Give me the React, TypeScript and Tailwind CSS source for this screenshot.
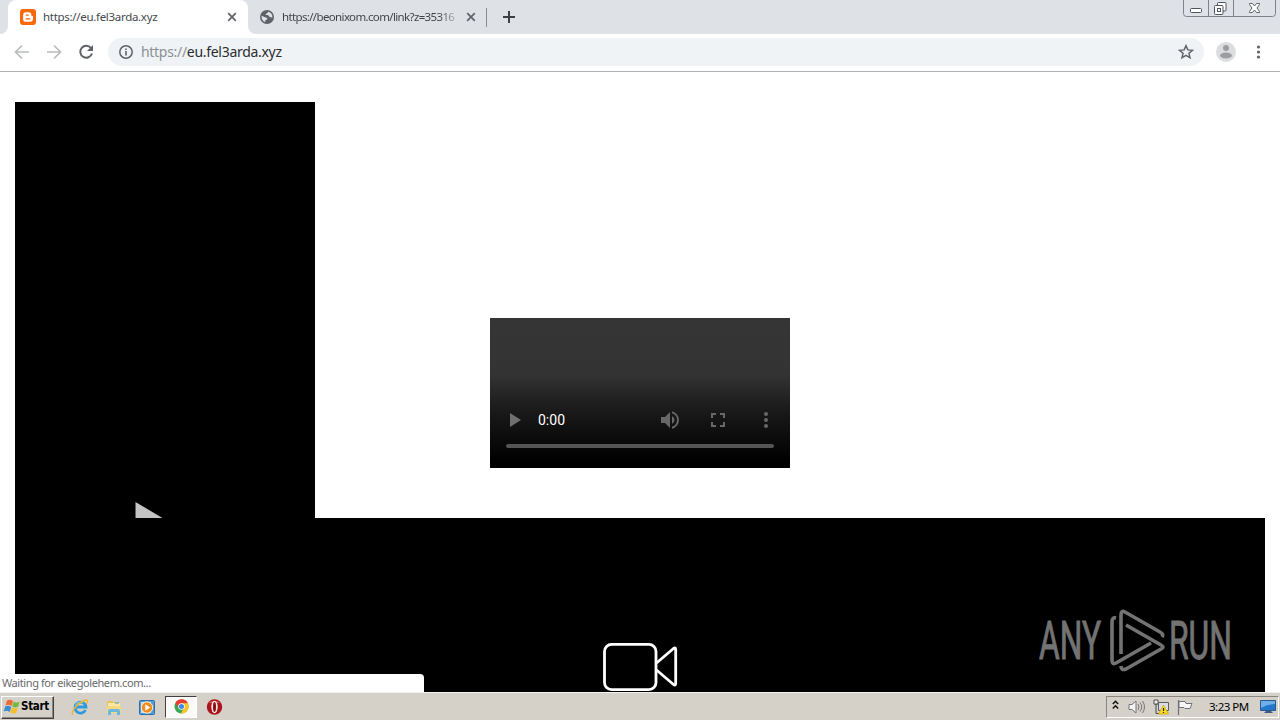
import React from 'react';

function BloggerIcon() {
  return (
    <svg className="h-4 w-4 shrink-0" viewBox="0 0 16 16">
      <rect width="16" height="16" rx="3" fill="#f8690b" />
      <path d="M6 3.2h2.6a2.8 2.8 0 0 1 2.8 2.8c0 .8.3 1 .9 1 .5 0 .7.3.7.8v2a3 3 0 0 1-3 3H6a2.9 2.9 0 0 1-2.9-2.9V6.1A2.9 2.9 0 0 1 6 3.2Z" fill="#fff" />
      <path d="M6.2 6.1h2M6.2 9.9h3.6" stroke="#f8690b" strokeWidth="1.4" strokeLinecap="round" />
    </svg>
  );
}

function GlobeIcon() {
  return (
    <svg className="h-[14px] w-[14px] shrink-0" viewBox="0 0 14 14">
      <circle cx="7" cy="7" r="7" fill="#5f6368" />
      <path d="M1.6 5.8 5 7.2c1 .4 1.8.2 2.2 1.2.3.8-.3 1.2-1.2 1.4-.8.2-.4 1.7-.9 2.2C2.8 11.3 1.3 9 1.6 5.8ZM8 1.7c-.1 1-.2 1.3-1.2 1.5-.8.2-.5 1.2-1.3 1.5.8.9 2.2.2 3 .8.8.6.8 1.8 2 1.7.8-.1 1.1.3 1.9.3C12.7 4.5 10.9 2.1 8 1.7Z" fill="#dee1e6" />
    </svg>
  );
}

function CloseIcon() {
  return (
    <svg className="h-[10px] w-[10px] shrink-0" viewBox="0 0 10 10">
      <path d="m1.2 1.2 7.6 7.6m0-7.6-7.6 7.6" stroke="#5f6368" strokeWidth="1.7" />
    </svg>
  );
}

function TabStrip() {
  return (
    <div className="flex h-[34px] shrink-0 bg-[#dee1e6]">
      <svg className="h-[34px] w-2 shrink-0" viewBox="0 0 8 34">
        <path d="M8 26v8H0a8 8 0 0 0 8-8Z" fill="#fff" />
      </svg>
      <div className="flex w-[240px] items-center rounded-t-lg bg-white pl-3">
        <BloggerIcon />
        <span className="ml-[7px] w-[184px] whitespace-nowrap text-[11.5px] tracking-[-0.3px] text-[#45494d]">https://eu.fel3arda.xyz</span>
        <CloseIcon />
      </div>
      <div className="flex w-[239px] items-center">
        <svg className="h-[34px] w-2 shrink-0" viewBox="0 0 8 34">
          <path d="M0 26v8h8a8 8 0 0 1-8-8Z" fill="#fff" />
        </svg>
        <div className="ml-1 flex items-center">
          <GlobeIcon />
          <span className="ml-2 w-[175px] whitespace-nowrap bg-gradient-to-r from-[#3c4043] from-90% to-[#3c404333] bg-clip-text text-[11.5px] tracking-[-0.64px] text-transparent">https://beonixom.com/link?z=35316</span>
          <span className="ml-[9px] flex"><CloseIcon /></span>
        </div>
      </div>
      <div className="-ml-px mt-2 h-[19px] w-px shrink-0 bg-[#888c91]" />
      <svg className="ml-4 mt-[11px] h-3 w-3 shrink-0" viewBox="0 0 12 12">
        <path d="M6 0v12M0 6h12" stroke="#3c4043" strokeWidth="2" />
      </svg>
      <svg className="ml-auto mr-1 h-[17px] w-[93px] shrink-0" viewBox="0 0 93 17" fill="none">
        <path d="M.5 0v13.5a3 3 0 0 0 3 3h86a3 3 0 0 0 3-3V0M25.500 0v16M50.500 0v16" stroke="#7e828b" />
        <rect x="7.500" y="8.500" width="11" height="4" rx="1" fill="#fff" stroke="#50545e" />
        <rect x="34.500" y="2.500" width="8.500" height="8.500" rx="1" fill="#fff" stroke="#50545e" />
        <rect x="31.500" y="5.500" width="8.500" height="9" rx="1" fill="#fff" stroke="#50545e" />
        <rect x="34.500" y="8.500" width="3" height="3" stroke="#50545e" />
        <path d="M66.500 3.500h3l2 2.500 2-2.500h3v1L74 8l2.500 3.500v1h-3l-2-2.500-2 2.500h-3v-1L69 8l-2.500-3.500Z" fill="#fff" stroke="#50545e" strokeWidth=".9" />
      </svg>
    </div>
  );
}

function Toolbar() {
  return (
    <div className="flex h-[38px] shrink-0 items-center border-b border-[#b0b1b3] bg-white pb-px">
      <svg className="ml-[14px] h-4 w-[82px] shrink-0" viewBox="0 0 82 16" fill="none">
        <path d="M15 8H2M8 1.500 1.500 8 8 14.500M33 8h13M40 1.500 46.500 8 40 14.500" stroke="#babcbe" strokeWidth="1.700" />
        <path d="M77 4A6 6 0 1 0 78 9.500" stroke="#5f6368" strokeWidth="2" />
        <path d="M79 1v6h-6Z" fill="#5f6368" />
      </svg>
      <div className="ml-3 flex h-7 w-[1096px] items-center rounded-full bg-[#f0f3f5] pl-[11px] pr-[10px]">
        <svg className="h-[14px] w-[14px] shrink-0" viewBox="0 0 14 14">
          <circle cx="7" cy="7" r="6.200" fill="none" stroke="#5f6368" strokeWidth="1.500" />
          <path d="M7 6v4.500M7 3.400v1.500" stroke="#5f6368" strokeWidth="1.600" />
        </svg>
        <span className="-mt-px ml-2 whitespace-nowrap text-[14px] tracking-[-0.3px] text-[#2b2d30]"><span className="text-[#8a9095]">https://</span>eu.fel3arda.xyz</span>
        <svg className="ml-auto h-4 w-4 shrink-0" viewBox="0 0 16 16">
          <path d="m8 1.700 1.850 4.200 4.600.4-3.500 3 1.050 4.500L8 11.400l-4 2.400 1.050-4.500-3.500-3 4.600-.4Z" fill="none" stroke="#5f6368" strokeWidth="1.500" />
        </svg>
      </div>
      <svg className="ml-3 h-5 w-5 shrink-0" viewBox="0 0 20 20">
        <circle cx="10" cy="10" r="10" fill="#dcdddf" />
        <circle cx="10" cy="6" r="3" fill="#9b9da0" />
        <ellipse cx="10" cy="13.500" rx="6" ry="3" fill="#9b9da0" />
      </svg>
      <svg className="ml-5 h-4 w-[5px] shrink-0" viewBox="0 0 5 16" fill="#5f6368">
        <circle cx="2.500" cy="3" r="1.600" /><circle cx="2.500" cy="8" r="1.600" /><circle cx="2.500" cy="13" r="1.600" />
      </svg>
    </div>
  );
}

function VideoPlayer() {
  return (
    <div className="flex h-[150px] w-[300px] flex-col justify-end bg-[linear-gradient(#353535_0%,#333_38%,#1d1d1d_58%,#0d0d0d_78%,#000_96%)] px-4 pb-5">
      <div className="flex h-8 items-center">
        <svg className="ml-1 h-[14px] w-[11px] shrink-0" viewBox="0 0 11 14"><path d="M0 0v14l11-7Z" fill="#6f6f6f" /></svg>
        <span className="ml-[17px] font-['Roboto'] text-[14px] text-white">0:00</span>
        <svg className="ml-auto h-6 w-6 shrink-0" viewBox="0 0 24 24" fill="#686868">
          <path d="M3 9v6h4l5 5V4L7 9H3zm13.500 3A4.500 4.500 0 0 0 14 7.970v8.050A4.500 4.500 0 0 0 16.500 12zM14 3.230v2.060a7 7 0 0 1 0 13.420v2.060a9 9 0 0 0 0-17.540z" />
        </svg>
        <svg className="ml-6 h-6 w-6 shrink-0" viewBox="0 0 24 24" fill="#686868">
          <path d="M7 14H5v5h5v-2H7v-3zm-2-4h2V7h3V5H5v5zm12 7h-3v2h5v-5h-2v3zM14 5v2h3v3h2V5h-5z" />
        </svg>
        <svg className="-mr-1 ml-6 h-6 w-6 shrink-0" viewBox="0 0 24 24" fill="#686868">
          <circle cx="12" cy="6" r="2" /><circle cx="12" cy="12" r="2" /><circle cx="12" cy="18" r="2" />
        </svg>
      </div>
      <div className="mt-2 h-1 rounded-full bg-[#555]" />
    </div>
  );
}

function AnyRunMark() {
  return (
    <svg className="h-[64px] w-[200px] shrink-0" viewBox="0 0 200 64" fill="#737373">
      <g fontFamily="Roboto, sans-serif" fontSize="53" stroke="#737373" strokeWidth="1">
        <text x="1" y="50" textLength="62" lengthAdjust="spacingAndGlyphs">ANY</text>
        <text x="131" y="50" textLength="63" lengthAdjust="spacingAndGlyphs">RUN</text>
      </g>
      <g fill="none" stroke="#737373" strokeWidth="3.600" strokeLinejoin="round">
        <path d="M83 45V6q0-5 4-3l35 20q4 2 2 5" />
        <path d="M78 9q-4-1-4 4v38q0 5 4 3l35-20" />
        <path d="M88 16l35 20q4 2 0 4L88 60q-5 2-5-3" />
      </g>
    </svg>
  );
}

function Page() {
  return (
    <div className="relative flex h-[620px] shrink-0 flex-col overflow-hidden bg-white px-[15px] pt-[30px]">
      <div className="flex h-[416px] shrink-0">
        <div className="flex w-[300px] items-end bg-black">
          <svg className="ml-[120px] h-4 w-[28px]" viewBox="0 0 28 16"><path d="M.5 0v16H27.500Z" fill="#c4c4c4" /></svg>
        </div>
        <div className="ml-[175px] mt-[216px]"><VideoPlayer /></div>
      </div>
      <div className="flex h-[174px] shrink-0 items-start bg-black">
        <svg className="ml-[587px] mt-[124px] h-[50px] w-[77px] shrink-0" viewBox="0 0 77 50" fill="none" stroke="#fff" strokeWidth="2.800" strokeLinejoin="round">
          <rect x="2.500" y="2.400" width="51.500" height="45.200" rx="7" />
          <path d="M54.500 21 71.500 6.500q2.200-1.500 2.200 1v34q0 2.500-2.200 1L54.500 28" />
        </svg>
        <div className="ml-auto mr-[27px] mt-[91px]"><AnyRunMark /></div>
      </div>
      <div className="absolute bottom-0 left-0 flex h-[18px] w-[424px] items-center rounded-tr-[4px] bg-white pl-[2px] text-[11px] tracking-[-0.41px] text-[#686a6d]">Waiting for eikegolehem.com...</div>
    </div>
  );
}

function StartButton() {
  return (
    <div className="flex h-[23px] w-[53px] items-center border border-b-[#404040] border-l-white border-r-[#404040] border-t-white bg-[#d5d0c8] pl-px shadow-[inset_-1px_-1px_#8b877f]">
      <svg className="h-4 w-[17px] shrink-0" viewBox="0 0 17 16">
        <path d="M4 1.500q3-1.500 6 .5L8.500 7q-3-2-6-.5Z" fill="#ef6935" />
        <path d="M10.700 2.500q3 2 6 0L15.200 7.500q-3 2-6 0Z" fill="#75b943" />
        <path d="M2.200 7.500q3-1.500 6 .5L6.700 13q-3-2-6-.5Z" fill="#398bd2" />
        <path d="M8.900 8.500q3 2 6 0L13.400 13.500q-3 2-6 0Z" fill="#f5bf27" />
      </svg>
      <span className="ml-px font-['DejaVu_Sans_Condensed','DejaVu_Sans'] text-[11.5px] font-bold tracking-[-0.3px] text-black [font-stretch:condensed]">Start</span>
    </div>
  );
}

function Taskbar() {
  return (
    <div className="flex h-7 shrink-0 items-center border-t border-[#f3f1ed] bg-[#d5d0c8] pl-px pt-px">
      <StartButton />
      <svg className="ml-[17px] h-[18px] w-[18px] shrink-0" viewBox="0 0 18 18" fill="none">
        <path d="M14.500 12A5.500 5.500 0 1 1 15 9H5" stroke="#2e9bdc" strokeWidth="2.800" />
        <path d="M4.500 7.500A5 5 0 0 1 12 5" stroke="#86d3f6" strokeWidth="1" />
        <path d="M2 16.500c-3-2 4-11 11-14 4-1.500 4 .5 3 3" stroke="#efb72e" strokeWidth="1.500" />
      </svg>
      <svg className="ml-4 h-[17px] w-[18px] shrink-0" viewBox="0 0 18 17">
        <path d="M2 3q0-1 1-1h4l1 1h7v11H2Z" fill="#e8c35c" />
        <path d="M3 4h12v8H3Z" fill="#fae9a0" />
        <path d="M2 7h14v7H2Z" fill="#f4d980" />
        <path d="M3 16v-4q0-2 2-2h8q2 0 2 2v4h-3v-3H6v3Z" fill="#69b9df" />
        <path d="M10 4h4" stroke="#65a9d4" strokeWidth="1.200" />
      </svg>
      <svg className="ml-4 h-[17px] w-[17px] shrink-0" viewBox="0 0 17 17">
        <rect x=".5" y="1.500" width="15" height="14" rx="1" fill="#4c9cda" stroke="#2e6ea8" />
        <path d="M2 3h10v11H2Z" fill="#b8def7" />
        <circle cx="8" cy="8.500" r="5.700" fill="#f58a1f" stroke="#fff1d3" />
        <path d="m6.300 5.300 5 3.200-5 3.200Z" fill="#fff" />
      </svg>
      <div className="ml-[9px] flex h-[22px] w-[32px] items-center justify-center border border-b-white border-l-[#404040] border-r-white border-t-[#404040] bg-[#fbfaf9]">
        <svg className="-mt-px h-[15px] w-[15px]" viewBox="0 0 16 16">
          <circle cx="8" cy="8" r="7.500" fill="#38a852" />
          <path d="M1.500 4.200A7.500 7.500 0 0 1 15 5H8L4.900 9.700Z" fill="#e63e30" />
          <path d="M8 4.500h6.700A7.500 7.500 0 0 1 7.300 15.500L11 9Z" fill="#fac727" />
          <circle cx="8" cy="8" r="3.500" fill="#fff" /><circle cx="8" cy="8" r="2.700" fill="#4286e9" />
        </svg>
      </div>
      <svg className="ml-[9px] h-4 w-[17px] shrink-0" viewBox="0 0 17 16">
        <ellipse cx="8.500" cy="8" rx="7.700" ry="7.700" fill="#ac1319" />
        <path d="M2.500 4Q8 0 14 4 9 3 2.500 4Z" fill="#ec746c" />
        <ellipse cx="8.500" cy="8" rx="3.200" ry="6.200" fill="#f3e7e5" />
        <ellipse cx="8.500" cy="8" rx="1.500" ry="4.900" fill="#891015" />
      </svg>
      <div className="ml-auto mr-px flex h-[22px] w-[173px] items-center border border-b-white border-l-[#8b877f] border-r-white border-t-[#8b877f]">
        <svg className="-mt-1 ml-[5px] h-[10px] w-[7px] shrink-0" viewBox="0 0 7 10" fill="none" stroke="#111" strokeWidth="1.500"><path d="m.8 4 2.700-2.700L6.200 4M.8 8.500l2.700-2.700 2.700 2.700" /></svg>
        <svg className="ml-[9px] h-4 w-[18px] shrink-0" viewBox="0 0 18 16" fill="none" stroke="#77777b">
          <path d="M1 5.500h3L8 2v12l-4-3.500H1Z" fill="#f2f2f2" /><path d="M10 5q2 3 0 6M12 3.500q3.500 4.500 0 9M14.500 2q4 6 0 12" />
        </svg>
        <svg className="ml-[7px] h-4 w-4 shrink-0" viewBox="0 0 16 16">
          <path d="M5.500 3.500h10v8h-10Z" fill="#d9dce0" stroke="#5c5d61" /><path d="M7 14.500h6" stroke="#5c5d61" />
          <path d="M1.500 1v4h3V1M3 5v9.500h4" fill="none" stroke="#46474a" /><path d="M1 1h4v4H1Z" fill="#eee" stroke="#555" />
          <path d="m10.500 6 5 9h-10Z" fill="#ffdc19" stroke="#bf9a00" strokeWidth=".6" /><path d="M10.500 9v3M10.500 13v1" stroke="#222" strokeWidth="1.200" />
        </svg>
        <svg className="ml-[8px] h-4 w-4 shrink-0" viewBox="0 0 16 16"><path d="M1.500 1v15" stroke="#707177" strokeWidth="1.200" /><path d="M2 2.500h6l1 2h6L13 9.500H8l-1-1H2Z" fill="#f6f6f6" stroke="#707177" /></svg>
        <span className="ml-4 whitespace-nowrap text-[11.5px] tracking-[-0.5px] text-black">3:23 PM</span>
        <svg className="ml-auto mr-[2px] h-[14px] w-4 shrink-0" viewBox="0 0 16 14">
          <path d="M.5.500h15v10H.500Z" fill="#2478cc" stroke="#2d598a" /><path d="M1 1h14v3Q7 4 1 8Z" fill="#6db0e9" /><path d="M6 11h5l2 2H4Z" fill="#3b5b86" />
        </svg>
      </div>
    </div>
  );
}

export default function App() {
  return (
    <div className="flex h-[720px] w-[1280px] flex-col overflow-hidden bg-white font-['Noto_Sans','Open_Sans',sans-serif]">
      <TabStrip />
      <Toolbar />
      <Page />
      <Taskbar />
    </div>
  );
}
